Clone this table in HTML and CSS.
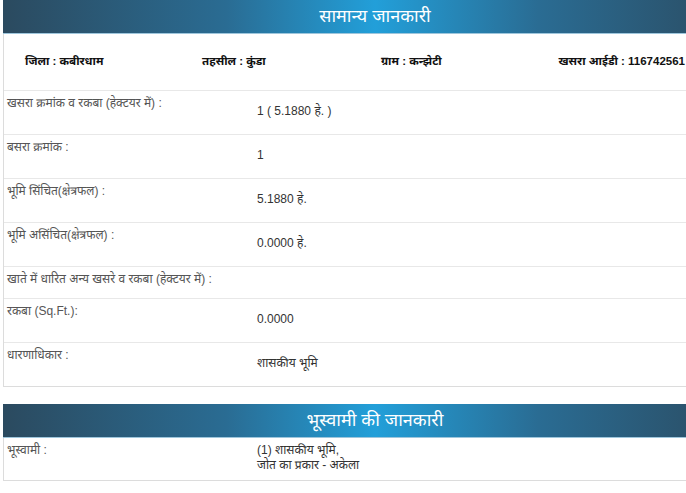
FILE: index.html
```html
<!DOCTYPE html>
<html lang="hi">
<head>
<meta charset="utf-8">
<title>सामान्य जानकारी</title>
<link rel="stylesheet" href="styles.css">
</head>
<body>
<div class="page">
  <section class="panel">
    <h2 class="panel-head">सामान्य जानकारी</h2>
    <div class="info-row">
      <div class="info-inner">
        <div class="info-cell c1">जिला : कबीरधाम</div>
        <div class="info-cell c2">तहसील : कुंडा</div>
        <div class="info-cell c3">ग्राम : कन्झेटी</div>
        <div class="info-cell c4">खसरा आईडी : 116742561</div>
      </div>
    </div>
    <div class="row">
      <div class="label">खसरा क्रमांक व रकबा (हेक्टयर में) :</div>
      <div class="value">1 ( 5.1880 हे. )</div>
    </div>
    <div class="row">
      <div class="label">बसरा क्रमांक :</div>
      <div class="value">1</div>
    </div>
    <div class="row">
      <div class="label">भूमि सिंचित(क्षेत्रफल) :</div>
      <div class="value">5.1880 हे.</div>
    </div>
    <div class="row">
      <div class="label">भूमि असिंचित(क्षेत्रफल) :</div>
      <div class="value">0.0000 हे.</div>
    </div>
    <div class="row short">
      <div class="label wide">खाते में धारित अन्य खसरे व रकबा (हेक्टयर में) :</div>
    </div>
    <div class="row">
      <div class="label">रकबा (Sq.Ft.):</div>
      <div class="value">0.0000</div>
    </div>
    <div class="row last">
      <div class="label">धारणाधिकार :</div>
      <div class="value">शासकीय भूमि</div>
    </div>
  </section>

  <section class="panel second">
    <h2 class="panel-head">भूस्वामी की जानकारी</h2>
    <div class="row owner last">
      <div class="label">भूस्वामी :</div>
      <div class="value top">(1) शासकीय भूमि,<br>जोत का प्रकार - अकेला</div>
    </div>
  </section>
</div>
</body>
</html>
```

FILE: styles.css
```css
html, body {
  margin: 0;
  padding: 0;
  background: #fff;
  overflow: hidden;
}
body {
  font-family: "Liberation Sans", Arial, "Noto Sans Devanagari", "Noto Sans", sans-serif;
  font-size: 12px;
  color: #333;
}
.page {
  width: 744px;
  margin-left: 3px;
}
.panel {
  border-left: 1px solid #dcdcdc;
  border-bottom: 1px solid #dcdcdc;
}
.panel.second {
  margin-top: 17px;
}
.panel-head {
  margin: 0 0 0 -1px;
  height: 33px;
  line-height: 32px;
  text-align: center;
  font-size: 18px;
  font-weight: normal;
  color: #fff;
  background: linear-gradient(to right, #2b4a5f 0%, #2a6c93 30%, #229fd9 50%, #2a6c93 72%, #2b4a5f 100%);
  border-bottom: 1px solid #9ec6dc;
}
.info-row {
  height: 56px;
  border-bottom: 1px solid #e8e8e8;
}
.info-inner {
  display: flex;
  width: 681px;
  height: 100%;
  align-items: center;
  font-weight: bold;
  font-size: 11.5px;
  color: #111;
  white-space: nowrap;
}
.c1 {
  width: 177px;
  padding-left: 21px;
  flex: none;
}
.c2 {
  width: 179px;
  flex: none;
}
.c3 {
  width: 177px;
  flex: none;
}
.c4 {
  margin-left: auto;
}
.row {
  display: flex;
  height: 43px;
  border-bottom: 1px solid #e8e8e8;
}
.row.short {
  height: 31px;
}
.row.last {
  border-bottom: none;
}
.row.owner {
  height: 42px;
}
.label {
  width: 250px;
  padding: 5px 0 0 3px;
  color: #555;
  flex: none;
}
.label.wide {
  width: auto;
}
.value {
  padding-top: 13px;
  color: #333;
}
.value.top {
  padding-top: 5px;
  line-height: 15px;
}
```
